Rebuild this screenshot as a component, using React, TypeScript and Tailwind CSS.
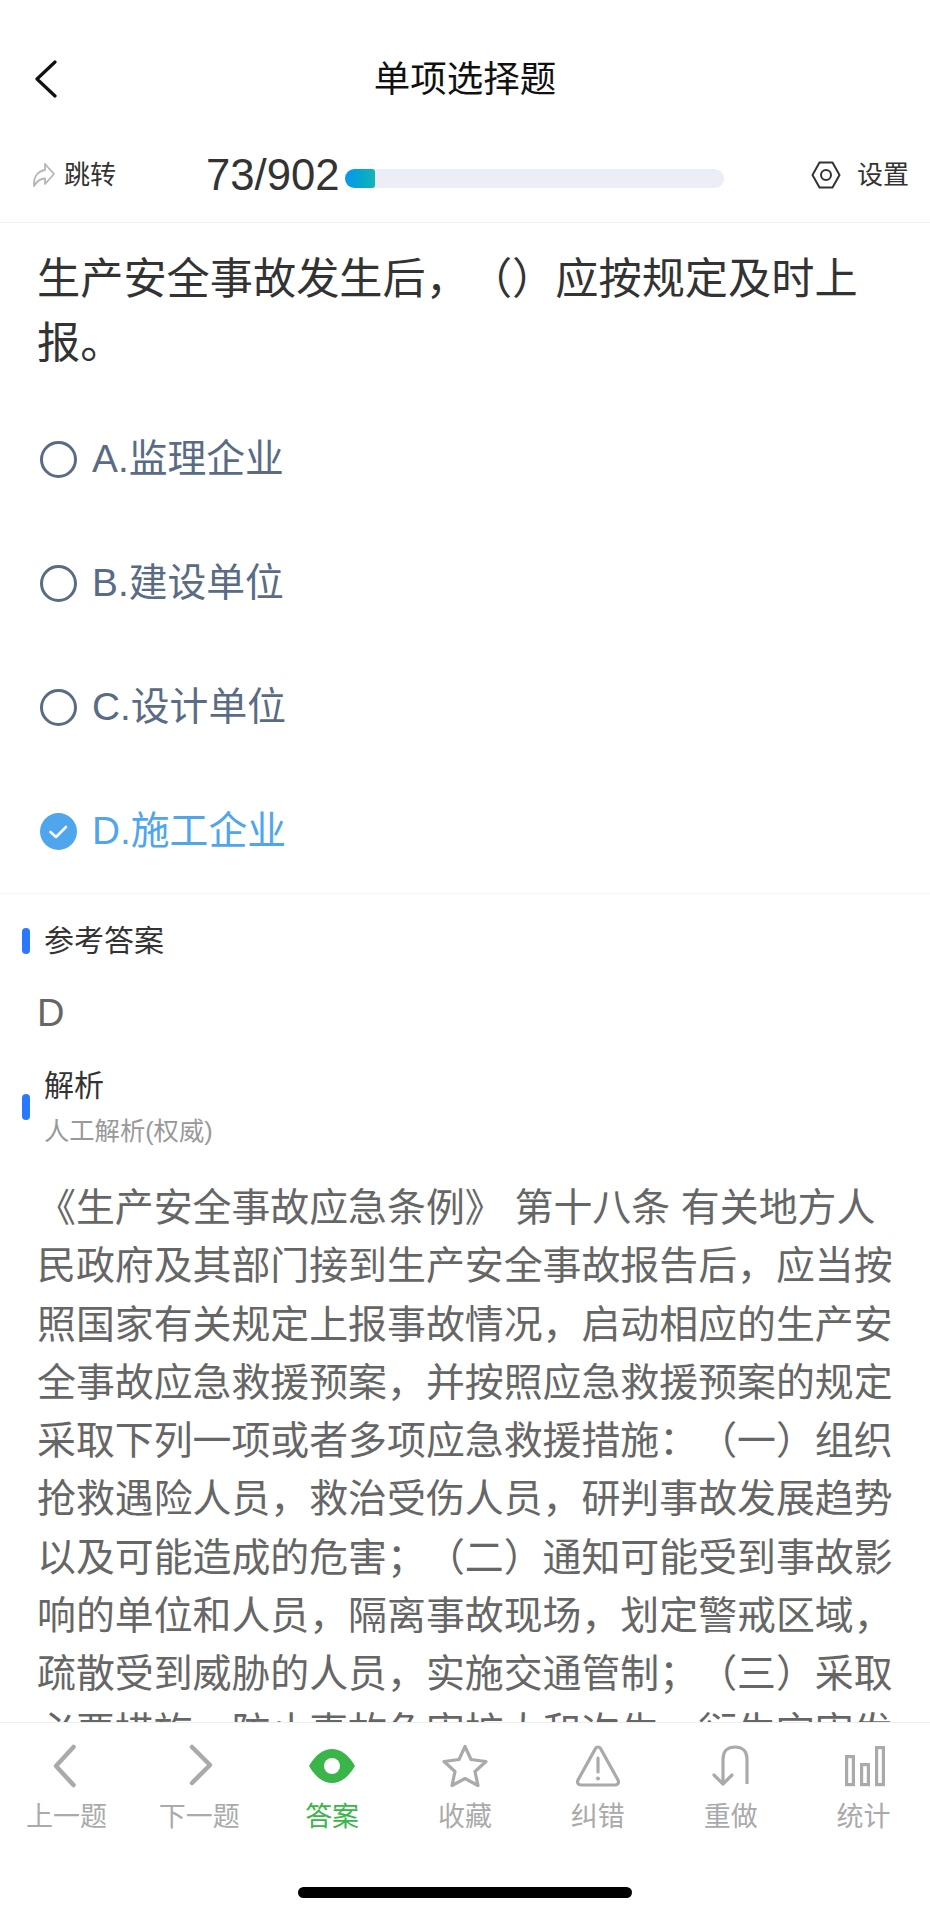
const FONT = "font-['Liberation_Sans','Noto_Sans_CJK_SC',sans-serif] [text-spacing-trim:space-all]";

const options = [
  { key: "A.监理企业", selected: false },
  { key: "B.建设单位", selected: false },
  { key: "C.设计单位", selected: false },
  { key: "D.施工企业", selected: true },
];

const Back = () => (
  <svg width="24" height="38" viewBox="0 0 24 38" fill="none" stroke="#111" strokeWidth="3.2" strokeLinecap="round" strokeLinejoin="round">
    <path d="M21 2 L3 19 L21 36" />
  </svg>
);

const icons: Record<string, React.ReactNode> = {
  prev: (
    <svg width="48" height="44" viewBox="0 0 48 44" fill="none" stroke="#aaaaaa" strokeWidth="4.5" strokeLinecap="round" strokeLinejoin="round">
      <path d="M31.5 3 L14 22 L31.5 41" />
    </svg>
  ),
  next: (
    <svg width="48" height="44" viewBox="0 0 48 44" fill="none" stroke="#aaaaaa" strokeWidth="4.5" strokeLinecap="round" strokeLinejoin="round">
      <path d="M17 3 L35 21 L17 39" />
    </svg>
  ),
  eye: (
    <svg width="48" height="44" viewBox="0 0 48 44">
      <path d="M1 22 C8 10 16 5 24 5 C32 5 40 10 47 22 C40 34 32 39 24 39 C16 39 8 34 1 22 Z" fill="#39b54a" />
      <circle cx="24" cy="22" r="8" fill="#fff" />
    </svg>
  ),
  star: (
    <svg width="48" height="44" viewBox="0 0 48 44" fill="none" stroke="#aaaaaa" strokeWidth="3.2" strokeLinejoin="round">
      <path d="M24 2.5 L30 15.5 L45 17.5 L34 27.5 L37 41.5 L24 34.5 L11 41.5 L14 27.5 L3 17.5 L18 15.5 Z" />
    </svg>
  ),
  warn: (
    <svg width="48" height="44" viewBox="0 0 48 44" fill="none" stroke="#aaaaaa" strokeWidth="3.2" strokeLinejoin="round" strokeLinecap="round">
      <path d="M24 3 C25 3 26 3.6 26.6 4.6 L44 36 C45.2 38.6 44 41 41 41 L7 41 C4 41 2.8 38.6 4 36 L21.4 4.6 C22 3.6 23 3 24 3 Z" />
      <path d="M24 14 L24 28" />
      <circle cx="24" cy="34.5" r="1.6" fill="#aaaaaa" stroke="#aaaaaa" strokeWidth="1" />
    </svg>
  ),
  redo: (
    <svg width="48" height="44" viewBox="0 0 48 44" fill="none" stroke="#aaaaaa" strokeWidth="3.2" strokeLinejoin="round">
      <path d="M40 40 L40 15 C40 7 35 3 28 3 C21 3 16 7 16 15 L16 39" />
      <path d="M7 31 L16 40 L25 31" strokeLinecap="round" />
    </svg>
  ),
  stats: (
    <svg width="48" height="44" viewBox="0 0 48 44" fill="none" stroke="#aaaaaa" strokeWidth="3.2">
      <rect x="6.6" y="12.6" width="6.8" height="28" />
      <rect x="21.6" y="20.6" width="6.8" height="20" />
      <rect x="36.6" y="3.6" width="6.8" height="37" />
    </svg>
  ),
};

const tabs = [
  { label: "上一题", icon: "prev" },
  { label: "下一题", icon: "next" },
  { label: "答案", icon: "eye", active: true },
  { label: "收藏", icon: "star" },
  { label: "纠错", icon: "warn" },
  { label: "重做", icon: "redo" },
  { label: "统计", icon: "stats" },
];

export default function App() {
  return (
    <div className={`${FONT} w-[930px] h-[1920px] bg-white flex flex-col overflow-hidden`}>
      <header className="shrink-0 pt-[61px] h-[128px] px-[34px] grid grid-cols-[1fr_auto_1fr] items-start">
        <div className="h-[38px] -mt-[1px] flex items-center"><Back /></div>
        <h1 className="text-[36.5px] leading-[38px] font-normal text-[#111]">单项选择题</h1>
        <div />
      </header>

      <div className="shrink-0 h-[95px] pb-[1px] border-b border-[#f2f2f2] flex items-center pl-[31px]">
        <svg width="25" height="26" viewBox="0 0 25 26" fill="none" stroke="#b5b5b5" strokeWidth="1.8" strokeLinejoin="round">
          <path d="M14 2 L23 12 L14 22 L14 16.5 C9 16.5 6 19 3 24 C2.5 17 5 9.5 14 8 Z" />
        </svg>
        <span className="ml-[8px] w-[52px] text-[26px] leading-[30px] text-[#333]">跳转</span>
        <span className="ml-[90px] w-[134px] text-[43.7px] leading-[50px] text-[#333]">73/902</span>
        <div className="mt-[7px] ml-[5px] w-[379px] h-[19px] rounded-full bg-[#ebeef6] overflow-hidden">
          <div className="w-[30px] h-full rounded-r-[3px] bg-gradient-to-r from-[#0e96ec] to-[#14b4b4]" />
        </div>
        <svg className="ml-[87px]" width="30" height="30" viewBox="0 0 30 30" fill="none" stroke="#333" strokeWidth="2" strokeLinejoin="round">
          <path d="M8.5 2.5 L21.5 2.5 L28.5 15 L21.5 27.5 L8.5 27.5 L1.5 15 Z" />
          <circle cx="15" cy="15" r="5" />
        </svg>
        <span className="ml-[16px] text-[26px] leading-[30px] text-[#333]">设置</span>
      </div>

      <main className="flex-1 min-h-0 overflow-hidden">
        <p className="pt-[24px] pl-[37px] w-[885px] text-[43.2px] leading-[64px] text-[#333]">
          生产安全事故发生后，（）应按规定及时上报。
        </p>

        <ul className="mt-[22px] border-b border-[#f6f6f6]">
          {options.map((o) => (
            <li key={o.key} className="h-[124px] pl-[40px] flex items-center">
              {o.selected ? (
                <svg width="37" height="37" viewBox="0 0 37 37">
                  <circle cx="18.5" cy="18.5" r="18.5" fill="#4fa6ec" />
                  <path d="M10.5 19 L16 24 L26 14" fill="none" stroke="#fff" strokeWidth="2.6" strokeLinecap="round" strokeLinejoin="round" />
                </svg>
              ) : (
                <span className="w-[37px] h-[37px] rounded-full border-[3px] border-[#5a6b85]" />
              )}
              <span className={`ml-[15px] text-[38.8px] leading-[44px] ${o.selected ? "text-[#4fa6ec]" : "text-[#5a6b85]"}`}>
                {o.key}
              </span>
            </li>
          ))}
        </ul>

        <div className="mt-[32px] h-[30px] pl-[22px] flex items-center">
          <span className="w-[8px] h-[26px] rounded-full bg-[#2979ff]" />
          <span className="ml-[14px] text-[30px] leading-[30px] text-[#333]">参考答案</span>
        </div>

        <div className="mt-[34px] pl-[37px] text-[38px] leading-[46px] text-[#666]">D</div>

        <div className="mt-[33px] pl-[22px] flex items-center">
          <span className="-mt-[4px] w-[8px] h-[26px] rounded-full bg-[#2979ff]" />
          <div className="ml-[14px]">
            <div className="text-[30px] leading-[34px] text-[#333]">解析</div>
            <div className="mt-[11px] text-[25.3px] leading-[34px] text-[#999]">人工解析(权威)</div>
          </div>
        </div>

        <p className="mt-[31px] ml-[37px] w-[862px] text-[38.9px] leading-[58.25px] text-[#666]">
          《生产安全事故应急条例》 第十八条 有关地方人民政府及其部门接到生产安全事故报告后，应当按照国家有关规定上报事故情况，启动相应的生产安全事故应急救援预案，并按照应急救援预案的规定采取下列一项或者多项应急救援措施：（一）组织抢救遇险人员，救治受伤人员，研判事故发展趋势以及可能造成的危害；（二）通知可能受到事故影响的单位和人员，隔离事故现场，划定警戒区域，疏散受到威胁的人员，实施交通管制；（三）采取必要措施，防止事故危害扩大和次生、衍生灾害发
        </p>
      </main>

      <nav className="shrink-0 h-[198px] border-t border-[#eeeeee] bg-white flex flex-col">
        <div className="grid grid-cols-7 pt-[21px]">
          {tabs.map((t) => (
            <div key={t.label} className="flex flex-col items-center">
              {icons[t.icon]}
              <span className={`mt-[12px] text-[27px] leading-[34px] ${t.active ? "text-[#39b54a]" : "text-[#aaaaaa]"}`}>
                {t.label}
              </span>
            </div>
          ))}
        </div>
        <div className="mt-[53px] mx-auto w-[334px] h-[11px] rounded-full bg-black" />
      </nav>
    </div>
  );
}
